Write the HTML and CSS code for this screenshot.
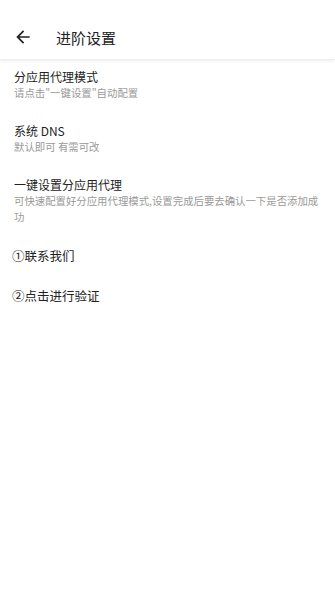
FILE: index.html
```html
<!DOCTYPE html>
<html lang="zh-CN">
<head>
    <meta charset="UTF-8">
    <meta name="viewport" content="width=device-width, initial-scale=1.0">
    <title>进阶设置</title>
    <link rel="stylesheet" href="styles.css">
</head>
<body>

<div class="toolbar">
    <svg class="back" viewBox="0 0 24 24" width="20" height="20">
        <path d="M20 11H7.83l5.59-5.59L12 4l-8 8 8 8 1.41-1.41L7.83 13H20v-2z" fill="#222"/>
    </svg>
    <div class="toolbar-title">进阶设置</div>
</div>

<div class="list">
    <div class="item">
        <div class="item-title">分应用代理模式</div>
        <div class="item-sub">请点击"一键设置"自动配置</div>
    </div>
    <div class="item">
        <div class="item-title">系统 DNS</div>
        <div class="item-sub">默认即可 有需可改</div>
    </div>
    <div class="item">
        <div class="item-title">一键设置分应用代理</div>
        <div class="item-sub">可快速配置好分应用代理模式,设置完成后要去确认一下是否添加成功</div>
    </div>
    <div class="item single">
        <div class="item-title">①联系我们</div>
    </div>
    <div class="item single">
        <div class="item-title">②点击进行验证</div>
    </div>
</div>

</body>
</html>
```

FILE: styles.css
```css
body {
    margin: 0;
    background: #fff;
    font-family: "Noto Sans CJK SC", "Noto Sans", sans-serif;
    color: #222;
}

.toolbar {
    display: flex;
    align-items: center;
    height: 40px;
    padding-top: 17px;
    padding-bottom: 2px;
    padding-left: 13px;
    box-shadow: 0 1px 3px rgba(0, 0, 0, 0.08);
    border-bottom: 1px solid #f0f0f0;
}

.back {
    display: block;
    flex-shrink: 0;
}

.toolbar-title {
    margin-left: 23px;
    font-size: 15px;
    color: #222;
}

.item {
    padding: 9px 14px 13px 14px;
}

.item.single {
    padding: 10px 12px 14px 12px;
}

.item-title {
    font-size: 12px;
    line-height: 16px;
    color: #222;
}

.single .item-title {
    font-size: 12.5px;
}

.item-sub {
    font-size: 10.4px;
    line-height: 16px;
    color: #999;
}
```
